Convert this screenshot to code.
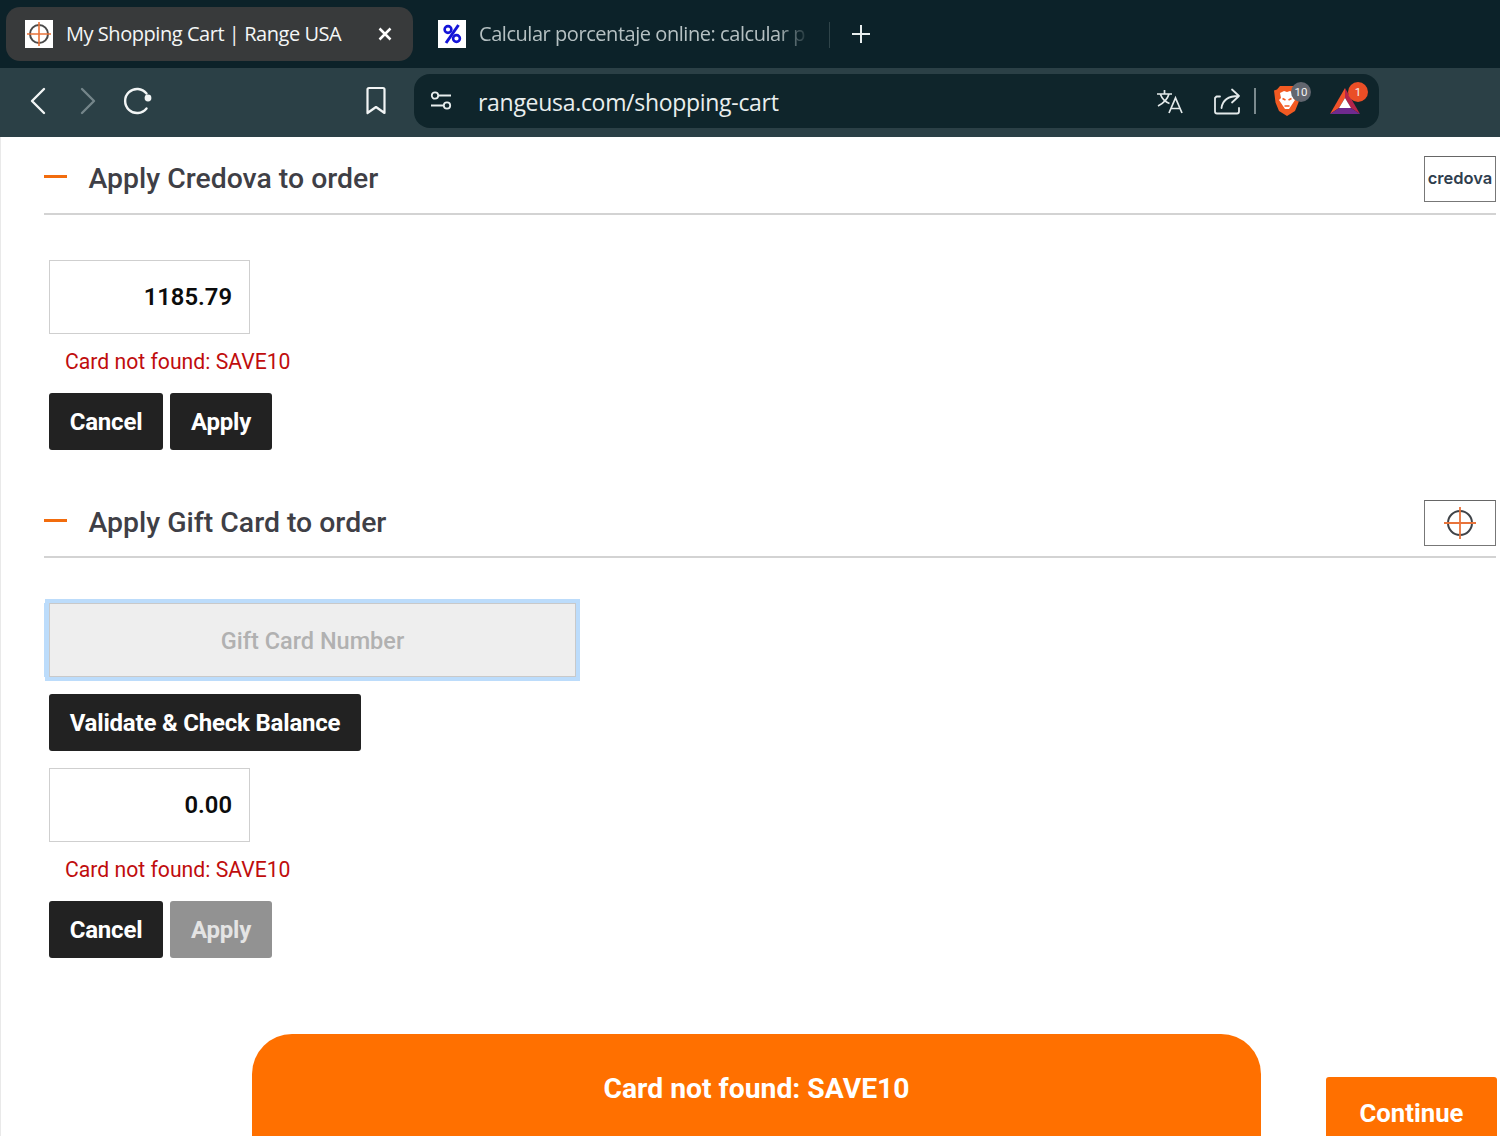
<template>
  <div class="app">
    <header class="tabstrip">
      <div class="tab active">
        <span class="favicon">
          <svg width="28" height="28" viewBox="0 0 28 28">
            <circle cx="14" cy="14" r="9" fill="none" stroke="#4a4a4a" stroke-width="2" />
            <path d="M14 2v24M2 14h24" stroke="#e8733a" stroke-width="1.6" />
          </svg>
        </span>
        <span class="tab-title">My Shopping Cart | Range USA</span>
        <svg class="close" width="14" height="14" viewBox="0 0 14 14">
          <path d="M1.500 1.500l11 11M12.500 1.500l-11 11" stroke="#fff" stroke-width="2.500" />
        </svg>
      </div>
      <div class="tab inactive">
        <span class="favicon percent">
          <svg width="28" height="28" viewBox="0 0 28 28">
            <rect width="28" height="28" fill="#fff" />
            <circle cx="10" cy="9.500" r="3.400" fill="none" stroke="#1414d8" stroke-width="2.600" />
            <circle cx="18.500" cy="18.500" r="3.400" fill="none" stroke="#1414d8" stroke-width="2.600" />
            <path d="M20.500 5L8 23" stroke="#1414d8" stroke-width="3" />
          </svg>
        </span>
        <span class="tab-title fade">Calcular porcentaje online: calcular p</span>
      </div>
      <span class="divider"></span>
      <svg class="plus" width="20" height="20" viewBox="0 0 20 20">
        <path d="M10 1v18M1 10h18" stroke="#e8eeee" stroke-width="2" />
      </svg>
    </header>

    <nav class="toolbar">
      <div class="nav-buttons">
        <svg width="16" height="28" viewBox="0 0 16 28">
          <path d="M14 2L2 14l12 12" fill="none" stroke="#f2f5f5" stroke-width="2.400" stroke-linecap="round" stroke-linejoin="round" />
        </svg>
        <svg width="16" height="28" viewBox="0 0 16 28">
          <path d="M2 2l12 12L2 26" fill="none" stroke="#74858a" stroke-width="2.400" stroke-linecap="round" stroke-linejoin="round" />
        </svg>
        <svg width="30" height="28" viewBox="0 0 30 28">
          <path d="M23.500 6.500A12 12 0 1 0 23.500 21.500" fill="none" stroke="#f2f5f5" stroke-width="2.400" stroke-linecap="round" />
          <circle cx="25" cy="11" r="3.400" fill="#f2f5f5" />
        </svg>
      </div>
      <svg class="bookmark" width="24" height="30" viewBox="0 0 24 30">
        <path d="M3.500 3.500a1.500 1.500 0 0 1 1.500-1.500h14a1.500 1.500 0 0 1 1.500 1.500V27L12 21l-8.500 6z" fill="none" stroke="#f2f5f5" stroke-width="2.200" stroke-linejoin="round" />
      </svg>
      <div class="omnibox">
        <svg class="tune" width="22" height="22" viewBox="0 0 22 22">
          <g fill="none" stroke="#e8eeee" stroke-width="1.800">
            <circle cx="5" cy="5.500" r="3.200" />
            <path d="M9 5.500h12M1 15.500h12" />
            <circle cx="17" cy="15.500" r="3.200" />
          </g>
        </svg>
        <span class="url">rangeusa.com/shopping-cart</span>
        <div class="omni-right">
          <svg class="translate" width="28" height="26" viewBox="0 0 28 26">
            <g fill="none" stroke="#e3e9ea" stroke-width="1.700">
              <path d="M1 6h15M8.500 2v4M13 6c-1.500 5-5 9-11 12M4.500 6.500c1.500 4 5 7.500 9 9" />
              <path d="M13 25l6.500-15L26 25M15 20.500h9" />
            </g>
          </svg>
          <svg class="share" width="28" height="28" viewBox="0 0 28 28">
            <g fill="none" stroke="#e3e9ea" stroke-width="1.800" stroke-linecap="round" stroke-linejoin="round">
              <path d="M7 9.500H3.500L2 11v13.500a2 2 0 0 0 2 2h20a2 2 0 0 0 2-2V21" />
              <path d="M8.500 21c1-7 6-12 17-12M19 2.500l7 6.500-7 6.500" />
            </g>
          </svg>
          <span class="omni-sep"></span>
          <span class="brave">
            <svg width="26" height="32" viewBox="0 0 26 32">
              <path d="M6 1h14l3 3.500 3 1-1.500 12L21 26l-8 5-8-5-3.500-8.500L0 5.500l3-1z" fill="#f25a22" />
              <path d="M6 8l4-2 3 1 3-1 4 2-1 5 2 2-4 6-2 3h-4l-2-3-4-6 2-2z" fill="#fff" />
              <path d="M8.500 13.500l3 1.500M17.500 13.500l-3 1.500M10.500 21h5" stroke="#f25a22" stroke-width="1.600" />
            </svg>
            <span class="badge grey">10</span>
          </span>
          <span class="bat">
            <svg width="32" height="28" viewBox="0 0 32 28">
              <path d="M16 1L1 27l9-6 6-10z" fill="#f0522a" />
              <path d="M16 1l15 26-9-6-6-10z" fill="#b5244a" />
              <path d="M1 27l9-6h12l9 6z" fill="#6f2a8e" />
              <path d="M16 11l-6 10h12z" fill="#fff" />
            </svg>
            <span class="badge red">1</span>
          </span>
        </div>
      </div>
    </nav>

    <main class="page">
      <section class="section first">
        <div class="section-head">
          <span class="dash"></span>
          <h2>Apply Credova to order</h2>
          <span class="logo-box credova">credova</span>
        </div>
        <div class="amount">1185.79</div>
        <p class="error">Card not found: SAVE10</p>
        <div class="actions">
          <button class="btn cancel">Cancel</button>
          <button class="btn apply">Apply</button>
        </div>
      </section>

      <section class="section second">
        <div class="section-head">
          <span class="dash"></span>
          <h2>Apply Gift Card to order</h2>
          <span class="logo-box">
            <svg width="34" height="34" viewBox="0 0 34 34">
              <circle cx="17" cy="17" r="12" fill="none" stroke="#3f4348" stroke-width="2" />
              <path d="M17 1v32M1 17h32" stroke="#e8733a" stroke-width="1.800" />
            </svg>
          </span>
        </div>
        <div class="gift-input">Gift Card Number</div>
        <button class="btn validate">Validate &amp; Check Balance</button>
        <div class="amount small-gap">0.00</div>
        <p class="error">Card not found: SAVE10</p>
        <div class="actions">
          <button class="btn cancel">Cancel</button>
          <button class="btn apply disabled">Apply</button>
        </div>
      </section>

      <div class="footer-row">
        <div class="banner">Card not found: SAVE10</div>
        <button class="continue">Continue</button>
      </div>
    </main>
  </div>
</template>

<style>
html, body { margin: 0; padding: 0; background: #fff; overflow: hidden; }
</style>

<style scoped>
.app {
  width: 1500px;
  height: 1136px;
  overflow: hidden;
  display: flex;
  flex-direction: column;
  font-family: Roboto, "Liberation Sans", sans-serif;
}
.tabstrip {
  height: 68px;
  flex: none;
  background: #0c2229;
  display: flex;
  align-items: flex-start;
  box-sizing: border-box;
  padding: 7px 0 0 6px;
}
.tab {
  height: 54px;
  display: flex;
  align-items: center;
  box-sizing: border-box;
  font-family: "Open Sans", "Noto Sans", sans-serif;
  font-size: 20px;
  letter-spacing: -0.45px;
  white-space: nowrap;
}
.tab.active {
  width: 407px;
  background: #383a3b;
  border-radius: 14px;
  padding: 0 21px 0 19px;
  color: #f4f6f6;
}
.tab.inactive {
  width: 372px;
  margin-left: 25px;
  color: #b5c0c2;
}
.favicon {
  width: 28px;
  height: 28px;
  flex: none;
  background: #fff;
  display: block;
  margin-right: 13px;
}
.favicon svg { display: block; }
.tab-title { flex: 1; padding-bottom: 2px; }
.fade {
  -webkit-mask-image: linear-gradient(to right, #000 90%, transparent 100%);
  mask-image: linear-gradient(to right, #000 90%, transparent 100%);
}
.close { flex: none; }
.divider {
  width: 1px;
  height: 26px;
  background: #2f4449;
  margin: 15px 0 0 19px;
}
.plus { margin: 17px 0 0 21px; }
.toolbar {
  height: 69px;
  flex: none;
  background: #2b4046;
  display: flex;
  align-items: center;
  padding: 0 0 3px 30px;
  box-sizing: border-box;
}
.nav-buttons {
  display: flex;
  align-items: center;
  gap: 34px;
  width: 334px;
  flex: none;
}
.nav-buttons svg:last-child { margin-left: -7px; }
.bookmark { flex: none; }
.omnibox {
  width: 965px;
  height: 54px;
  margin-left: 26px;
  background: #0f252b;
  border-radius: 16px;
  display: flex;
  align-items: center;
  padding: 0 11px 0 16px;
  box-sizing: border-box;
  flex: none;
}
.tune { flex: none; }
.url {
  margin-left: 26px;
  flex: 1;
  padding-top: 1px;
  color: #e9eeee;
  font-family: "Open Sans", "Noto Sans", sans-serif;
  font-size: 23px;
  letter-spacing: -0.3px;
}
.omni-right { display: flex; align-items: center; }
.share { margin-left: 29px; }
.translate { margin-right: 0; }
.omni-sep {
  width: 2px;
  height: 26px;
  background: #7b8a8e;
  margin-left: 13px;
}
.brave, .bat { position: relative; display: block; }
.brave { width: 26px; height: 32px; margin-left: 18px; }
.bat { width: 32px; height: 28px; margin-left: 29px; margin-right: 7px; }
.brave svg, .bat svg { display: block; }
.badge {
  position: absolute;
  width: 20px;
  height: 20px;
  border-radius: 50%;
  color: #f2f2f2;
  font-size: 11.500px;
  line-height: 20px;
  text-align: center;
}
.grey { background: #62666f; left: 17px; top: -3px; }
.red { background: #ea4e26; left: 19px; top: -5px; }

.page {
  flex: 1;
  background: #fff;
  border-left: 1px solid #e9e9e9;
  box-sizing: border-box;
  padding: 0 4px 0 43px;
  min-height: 0;
}
.section-head {
  display: flex;
  align-items: center;
  border-bottom: 2px solid #d3d3d3;
  box-sizing: border-box;
  height: 78px;
}
.first .section-head { padding-top: 7px; }
.second .section-head { padding-top: 9px; }
.dash {
  width: 23px;
  height: 3px;
  background: #f26c0d;
  flex: none;
  margin-bottom: 4px;
}
h2 {
  margin: 0 0 0 21.500px;
  flex: 1;
  font-size: 28.400px;
  font-weight: 500;
  color: #3f3f46;
  line-height: 34px;
}
.logo-box {
  width: 72px;
  height: 46px;
  box-sizing: border-box;
  border: 1px solid #777;
  border-top-color: #666;
  display: flex;
  align-items: center;
  justify-content: center;
  flex: none;
  background: #fff;
}
.credova {
  font-family: Inter, "Open Sans", sans-serif;
  font-size: 16.500px;
  font-weight: 600;
  color: #2f3e4e;
  padding-bottom: 2px;
}
.amount {
  width: 201px;
  height: 74px;
  margin: 45px 0 0 5px;
  box-sizing: border-box;
  border: 1px solid #cfcfcf;
  padding-right: 17px;
  display: flex;
  align-items: center;
  justify-content: flex-end;
  font-size: 23.800px;
  font-weight: 600;
  color: #0c0c0c;
}
.amount.small-gap { margin-top: 17px; }
.error {
  margin: 14px 0 0 21px;
  font-size: 21.200px;
  line-height: 28px;
  color: #c00d0d;
}
.actions {
  display: flex;
  gap: 7px;
  margin: 17px 0 0 5px;
}
.btn {
  height: 57px;
  padding: 0;
  border: none;
  border-radius: 3px;
  background: #222222;
  color: #fff;
  font-family: inherit;
  font-size: 24px;
  font-weight: 700;
  letter-spacing: -0.2px;
  display: block;
}
.cancel { width: 114px; }
.apply { width: 102px; }
.disabled { background: #929292; color: #e4e4e4; }
.second { margin-top: 30px; }
.gift-input {
  width: 527px;
  height: 74px;
  margin: 45px 0 0 5px;
  box-sizing: border-box;
  padding-top: 2px;
  background: #eeeeee;
  border: 1px solid #c9c9c9;
  outline: 4px solid #bcdcfb;
  box-shadow: -5px 0 0 #bcdcfb;
  display: flex;
  align-items: center;
  justify-content: center;
  font-size: 23.500px;
  font-weight: 500;
  color: #b1b1b1;
}
.validate {
  width: 312px;
  margin: 17px 0 0 5px;
}
.footer-row {
  display: flex;
  align-items: flex-start;
  margin-top: 76px;
  padding-left: 208px;
}
.banner {
  width: 1009px;
  height: 140px;
  flex: none;
  box-sizing: border-box;
  padding-top: 37px;
  background: #ff7000;
  border-radius: 40px 40px 0 0;
  text-align: center;
  color: #fff;
  font-size: 28.300px;
  font-weight: 700;
  line-height: 36px;
}
.continue {
  width: 171px;
  height: 80px;
  margin: 43px 0 0 65px;
  flex: none;
  border: none;
  border-radius: 3px 3px 0 0;
  background: #ff7000;
  color: #fff;
  font-family: inherit;
  font-size: 25.700px;
  font-weight: 700;
  padding: 0 0 8px;
}
</style>
